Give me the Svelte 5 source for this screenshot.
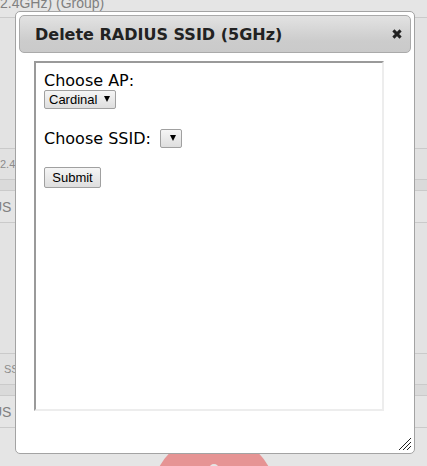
<script>
  let ap = $state('Cardinal');
  let ssid = $state('');
  let open = $state(true);
</script>

<div class="screen">
  <main class="page">
    <header class="band head"><span>2.4GHz) (Group)</span></header>
    <section class="band body"></section>
    <section class="band foot"><span class="name">2.4GHz</span></section>
    <div class="band gap"></div>
    <header class="band title"><span>US</span></header>
    <section class="band body"></section>
    <section class="band foot"><span class="ssid">SSID</span></section>
    <div class="band gap"></div>
    <header class="band title"><span>US</span></header>
    <svg class="badge" viewBox="0 0 124 39" aria-hidden="true">
      <circle cx="62" cy="62" r="62" fill="#e69494" />
      <circle cx="62" cy="35" r="5" fill="#e5e5e5" />
    </svg>
  </main>

  {#if open}
    <div class="dialog" role="dialog" aria-labelledby="dialog-title">
      <div class="titlebar">
        <h1 id="dialog-title">Delete RADIUS SSID (5GHz)</h1>
        <button class="close" type="button" aria-label="Close" onclick={() => (open = false)}>
          <svg width="10" height="10" viewBox="0 0 10 10" aria-hidden="true">
            <path d="M1.4 1.4 8.6 8.6M8.6 1.4 1.4 8.6" stroke="#222" stroke-width="3" />
          </svg>
        </button>
      </div>
      <form class="frame" onsubmit={(e) => e.preventDefault()}>
        <div class="field">
          <label for="ap">Choose AP:</label>
          <span class="pick">
            <select id="ap" class="ap" bind:value={ap}>
              <option>Cardinal</option>
            </select>
            <svg width="6" height="6" viewBox="0 0 6 6" aria-hidden="true"><path d="M0 0h6L3 6z" /></svg>
          </span>
        </div>
        <div class="row">
          <label for="ssid">Choose SSID:</label>
          <span class="pick">
            <select id="ssid" class="empty" bind:value={ssid}></select>
            <svg width="6" height="6" viewBox="0 0 6 6" aria-hidden="true"><path d="M0 0h6L3 6z" /></svg>
          </span>
        </div>
        <button class="submit" type="submit">Submit</button>
      </form>
      <svg class="grip" width="12" height="12" viewBox="0 0 12 12" shape-rendering="crispEdges" aria-hidden="true">
        <path d="M0 12L12 0M4 12l8-8M8 12l4-4" stroke="#222" stroke-width="1" />
      </svg>
    </div>
  {/if}
</div>

<style>
  :global(body) {
    margin: 0;
    background: #e5e5e5;
  }
  .screen {
    position: relative;
    min-height: 100vh;
    overflow: hidden;
    font-family: 'Liberation Sans', Arial, sans-serif;
  }
  .page {
    display: flex;
    flex-direction: column;
    height: 100vh;
    overflow: hidden;
    color: #808080;
    font-size: 14px;
  }
  .band {
    box-sizing: border-box;
    flex: none;
    display: flex;
    align-items: center;
    white-space: nowrap;
    border-bottom: 1px solid #cacaca;
  }
  .head {
    height: 18px;
    align-items: flex-start;
    line-height: 6px;
  }
  .body {
    height: 131px;
    background: #e3e3e3;
  }
  .foot {
    height: 31px;
    background: #e1e1e1;
    font-size: 11px;
    color: #8c8c8c;
  }
  .ssid {
    padding-left: 4px;
  }
  .gap {
    height: 11px;
    background: #dadada;
  }
  .title {
    height: 32px;
  }
  .title span {
    margin-left: -8px;
  }
  .badge {
    flex: none;
    align-self: center;
    width: 124px;
    height: 39px;
    margin-top: 6px;
  }
  .dialog {
    position: absolute;
    top: 11px;
    left: 15px;
    right: 12px;
    box-sizing: border-box;
    padding: 3px 3px 42px;
    border: 1px solid #a3a3a3;
    border-radius: 5px;
    background: #fff;
  }
  .titlebar {
    display: flex;
    align-items: center;
    justify-content: space-between;
    box-sizing: border-box;
    height: 38px;
    padding: 0 8px 0 15px;
    border: 1px solid #aaa;
    border-radius: 5px;
    background: linear-gradient(#e2e2e2, #cccccc 70%, #cacaca);
  }
  h1 {
    margin: 0;
    padding-top: 2px;
    font: bold 16px/20px 'DejaVu Sans', Verdana, sans-serif;
    color: #222;
  }
  .close {
    display: flex;
    padding: 0;
    border: 0;
    background: none;
  }
  .frame {
    box-sizing: border-box;
    height: 350px;
    margin: 8px 27px 0 15px;
    padding: 8px;
    border: 2px solid;
    border-color: #9a9a9a #ededed #ededed #9a9a9a;
    font: 16px/19px 'DejaVu Sans', Verdana, sans-serif;
    color: #000;
  }
  .field {
    display: flex;
    flex-direction: column;
    align-items: flex-start;
  }
  .row {
    display: flex;
    align-items: center;
    gap: 9px;
    margin-top: 20px;
  }
  .pick {
    position: relative;
    display: flex;
  }
  .pick svg {
    position: absolute;
    top: 6px;
    right: 6px;
    pointer-events: none;
  }
  select,
  .submit {
    box-sizing: border-box;
    margin: 0;
    border: 1px solid #a0a0a0;
    border-radius: 2px;
    background: linear-gradient(#f5f5f5, #dedede);
    font: 13px/15px 'Liberation Sans', Arial, sans-serif;
    color: #000;
  }
  select {
    appearance: none;
    height: 19px;
    padding: 0 4px;
  }
  .ap {
    width: 72px;
  }
  .empty {
    width: 22px;
  }
  .submit {
    display: block;
    height: 21px;
    min-width: 57px;
    margin-top: 19px;
    padding: 0 7px;
  }
  .grip {
    position: absolute;
    right: 3px;
    bottom: 3px;
  }
</style>
